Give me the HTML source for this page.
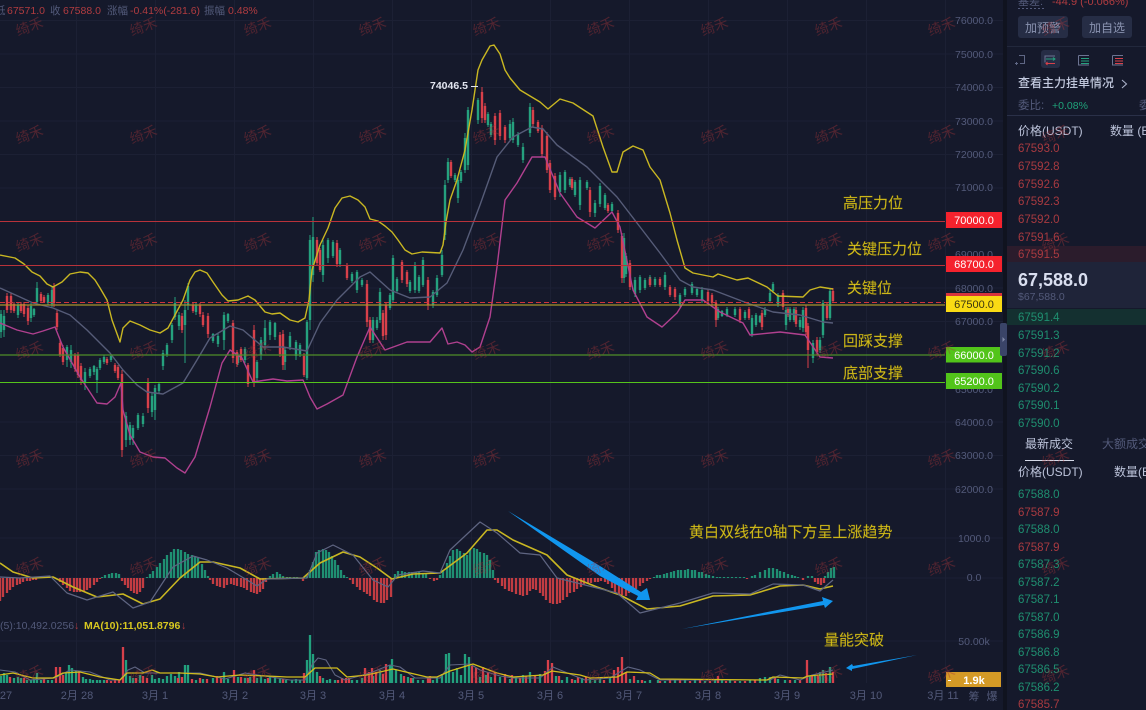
<!DOCTYPE html>
<html lang="zh">
<head>
<meta charset="utf-8">
<title>K线图</title>
<style>
html,body{margin:0;padding:0;background:#15192b;width:1146px;height:710px;overflow:hidden}
svg{display:block;font-family:"Liberation Sans","Noto Sans CJK SC",sans-serif;filter:blur(.35px)}
.ax{font-size:10.5px;fill:#535a7a;text-anchor:middle}
.dt{font-size:11px;fill:#535a7a;text-anchor:middle}
.tg{font-size:11px;fill:#fff;text-anchor:middle}
.an{font-size:15px;fill:#d6c01c;stroke:#8a7a10;stroke-width:.25}
.r{font-size:11.5px;fill:#a83a40}
.g{font-size:11.5px;fill:#1f8f70}
.h{font-size:12px;fill:#bcc3da}
.mu{fill:#535a7a}
.wm{font-size:14px;fill:#a8343a;fill-opacity:.4}
</style>
</head>
<body>
<svg width="1146" height="710" viewBox="0 0 1146 710" xmlns="http://www.w3.org/2000/svg">
<rect width="1146" height="710" fill="#15192b"/>
<!-- grid -->
<path d="M0 20.5H1003M0 54H1003M0 87.5H1003M0 121H1003M0 154.5H1003M0 188H1003M0 221.5H1003M0 288H1003M0 321.5H1003M0 422H1003M0 455.5H1003M0 489H1003M0 538H1003M0 578H1003M0 641H1003M76.5 0V683M155.5 0V683M234.5 0V683M313.5 0V683M392.5 0V683M471.5 0V683M550.5 0V683M629.5 0V683M708.5 0V683M787.5 0V683M866.5 0V683M945.5 0V683" stroke="#1c2034" stroke-width="1" fill="none"/>

<!-- candles: green wicks -->
<path stroke="#25a17e" stroke-width="1" fill="none" d="M1 310V338M4 310V337M18 302V318M31 303V322M34 308V317M37 282V305M48 293V305M52 287V307M67 345V367M71 345V368M85 368V390M90 367V378M94 365V375M97 367V393M100 358V370M104 355V364M111 355V362M126 412V447M130 422V445M133 425V445M138 413V430M143 413V427M152 393V417M155 385V420M159 383V393M163 350V370M167 343V357M172 323V343M175 297V320M179 312V330M185 300V363M188 283V310M196 303V315M213 333V343M218 333V347M224 312V350M228 313V323M238 353V365M245 347V363M257 360V383M261 337V360M265 320V350M270 320V340M275 322V340M285 348V370M290 332V350M296 340V360M300 343V357M307 320V380M310 235V330M313 217V282M323 240V282M328 238V263M333 240V258M340 248V267M352 272V283M357 270V293M362 278V287M373 317V343M377 317V330M380 288V323M390 293V310M393 255V303M397 277V293M410 280V293M415 262V293M419 275V293M423 257V287M433 290V308M437 275V297M442 250V277M445 180V240M448 158V183M455 173V182M458 177V203M461 170V183M465 133V173M468 107V170M478 98V124M488 112V127M491 122V137M510 120V140M513 118V143M518 132V147M523 143V163M530 103V137M560 172V197M565 170V193M570 177V187M575 180V197M580 177V210M587 180V190M595 200V217M600 183V207M605 193V210M612 202V213M624 233V283M626 253V277M635 277V297M640 275V293M645 278V290M650 275V287M655 277V287M665 272V290M680 293V307M685 287V297M692 282V295M697 287V297M702 287V303M718 307V320M722 310V317M727 307V317M735 307V317M745 310V320M752 315V337M756 313V327M760 315V323M765 307V317M770 290V303M773 282V293M778 293V307M786 307V330M790 307V322M794 307V322M800 317V330M803 307V332M813 340V363M820 337V353M823 300V338M830 288V320"/>
<!-- green bodies -->
<path stroke="#25a17e" stroke-width="2.4" fill="none" d="M1 314V332M4 316V330M18 305V315M31 306V318M34 309V315M37 288V302M48 295V303M52 290V304M67 347V360M71 350V362M85 372V382M90 369V376M94 366V372M97 369V380M100 360V368M104 357V362M111 356V360M126 416V440M130 425V440M133 428V438M138 415V428M143 416V424M152 396V412M155 388V410M159 384V391M163 353V366M167 345V355M172 325V340M175 303V317M179 315V326M185 310V325M188 286V305M196 305V312M213 334V341M218 336V344M224 315V340M228 314V321M238 355V363M245 349V360M257 362V378M261 340V355M265 328V345M270 322V335M275 323V337M285 350V362M290 336V347M296 342V356M300 345V354M307 322V378M310 240V320M313 237V275M323 245V275M328 240V258M333 242V256M340 250V264M352 274V281M357 272V290M362 280V285M373 320V340M377 320V328M380 292V320M390 295V308M393 258V300M397 279V291M410 282V291M415 265V290M419 277V291M423 260V285M433 292V305M437 278V295M442 255V275M445 185V235M448 162V180M455 175V180M458 180V198M461 172V181M465 138V170M468 110V165M478 100V120M488 114V125M491 124V135M510 124V138M513 122V140M518 134V145M523 147V160M530 107V133M560 175V192M565 172V190M570 179V185M575 182V195M580 180V205M587 182V188M595 203V213M600 186V204M605 195V208M612 204V211M624 238V278M626 256V274M635 280V294M640 277V290M645 280V288M650 277V285M655 279V285M665 275V287M680 295V304M685 289V295M692 284V293M697 289V295M702 290V300M718 309V318M722 311V316M727 309V315M735 309V315M745 312V318M752 318V334M756 315V325M760 316V322M765 309V315M770 293V301M773 284V291M778 295V304M786 310V325M790 309V320M794 309V320M800 320V327M803 310V328M813 343V358M820 340V350M823 303V335M830 291V318"/>
<!-- red wicks -->
<path stroke="#d8404a" stroke-width="1" fill="none" d="M7 293V313M11 293V313M14 302V313M21 302V313M24 302V317M28 305V325M41 292V303M44 295V303M54 283V307M57 310V330M60 340V357M63 345V365M75 353V372M78 352V378M81 363V385M107 357V365M115 363V373M118 365V380M122 370V457M148 378V413M182 313V333M193 303V313M200 303V317M203 312V327M208 313V338M233 320V363M237 350V367M241 347V362M248 363V387M254 325V387M280 332V357M283 330V370M304 353V377M317 237V266M320 248V272M337 240V267M347 263V280M367 280V327M370 317V343M383 310V340M386 302V340M402 260V283M407 270V287M428 277V310M451 160V178M482 87V123M485 103V123M495 113V145M500 110V140M505 125V143M533 107V127M538 120V133M542 125V157M547 132V173M550 160V193M555 173V200M572 177V190M590 187V217M608 203V213M618 210V233M622 233V283M630 260V290M650 277V287M660 277V287M670 285V297M675 287V300M708 290V303M712 293V305M716 300V327M740 307V323M749 307V320M762 310V330M783 290V310M788 307V317M796 307V327M806 305V335M808 323V368M817 337V355M827 303V320M833 288V303"/>
<path stroke="#d8404a" stroke-width="2.4" fill="none" d="M7 296V310M11 296V310M14 304V311M21 304V311M24 304V314M28 308V321M41 294V301M44 297V302M54 287V303M57 313V327M60 343V355M63 348V362M75 355V369M78 355V375M81 366V380M107 359V363M115 365V371M118 367V378M122 374V450M148 382V408M182 316V330M193 305V311M200 305V314M203 315V325M208 316V334M233 323V358M237 352V364M241 349V360M248 365V384M254 330V383M280 335V354M283 334V365M304 356V375M317 240V263M320 250V270M337 243V264M347 265V278M367 284V322M370 320V340M383 313V336M386 305V335M402 262V280M407 272V284M428 280V305M451 162V176M482 92V118M485 106V120M495 116V140M500 113V136M505 127V140M533 110V124M538 122V131M542 128V154M547 136V170M550 163V190M555 176V197M572 179V188M590 190V212M608 205V211M618 213V230M622 236V278M630 263V287M650 279V285M660 279V285M670 287V295M675 289V297M708 292V301M712 295V303M716 303V320M740 309V320M749 309V318M762 313V327M783 293V307M788 309V315M796 310V324M806 308V332M808 326V350M817 340V352M827 306V318M833 291V301"/>

<!-- bands -->
<polyline fill="none" stroke="#c9b722" stroke-width="1.4" stroke-linejoin="round" points="0,255 15,258 24,264 32,272 40,276 47,284 53,287 62,282 70,274 80,272 88,273 95,280 100,288 107,300 112,320 120,342 123,328 130,321 140,325 150,330 160,333 168,328 175,315 183,300 190,280 195,272 200,270 207,273 213,282 222,295 228,301 238,300 248,296 255,300 265,312 272,314 280,313 290,320 298,322 305,318 309,300 312,270 320,245 328,228 335,208 342,198 350,196 358,200 365,207 370,219 378,221 385,226 392,232 398,240 405,250 412,254 422,252 440,253 443,245 446,222 450,200 457,180 465,150 472,110 478,70 482,60 490,46 494,45 500,54 505,70 510,78 520,90 530,96 540,102 548,109 560,99 573,103 593,116 603,147 612,172 617,172 623,152 633,146 643,150 650,167 660,180 670,213 677,240 685,268 693,273 713,277 718,274 737,280 748,278 767,287 778,296 803,297 810,290 820,287 833,289"/>
<polyline fill="none" stroke="#565c78" stroke-width="1.4" stroke-linejoin="round" points="0,288 20,297 33,303 53,308 70,315 87,330 110,353 123,370 137,385 147,392 163,394 183,383 197,360 210,338 230,326 243,330 263,347 283,347 307,351 320,323 337,300 360,277 370,272 390,290 410,298 430,297 447,283 463,250 480,205 497,157 513,137 532,127 543,129 557,145 587,167 617,197 637,223 660,253 680,280 693,287 713,290 747,303 773,312 800,315 823,322 833,323"/>
<polyline fill="none" stroke="#b0408f" stroke-width="1.4" stroke-linejoin="round" points="0,323 17,330 33,334 43,331 55,327 63,347 80,377 97,403 107,404 115,397 121,383 123,410 130,435 140,452 153,457 165,458 177,468 185,473 195,457 210,407 222,363 230,350 242,358 253,382 273,379 287,381 303,380 310,397 317,409 327,404 343,395 357,357 370,327 385,350 407,342 430,342 442,328 448,344 457,342 465,345 472,352 480,347 490,317 497,267 505,200 517,183 532,157 545,157 560,193 577,217 595,228 612,212 620,227 633,290 647,317 662,327 677,313 685,300 703,300 720,312 743,323 750,335 780,332 805,335 820,357 833,358"/>

<!-- horizontal levels -->
<path d="M0 221.500H945M0 265.500H945" stroke="#b8323a" stroke-width="1" fill="none"/>
<path d="M0 302.500H945" stroke="#d0343c" stroke-width="1" stroke-dasharray="5 3" fill="none"/>
<path d="M0 305H945" stroke="#a8942a" stroke-width="1.2" fill="none"/>
<path d="M0 355H945" stroke="#4f8f28" stroke-width="1.2" fill="none"/>
<path d="M0 382.500H945" stroke="#55c41c" stroke-width="1" fill="none"/>

<!-- top info -->
<text x="0" y="14" style="font-size:10.5px">
<tspan x="-5" class="mu">低</tspan><tspan x="7" fill="#b03c40">67571.0</tspan><tspan x="50" class="mu">收</tspan><tspan x="63" fill="#b03c40">67588.0</tspan><tspan x="107" class="mu">涨幅</tspan><tspan x="130" fill="#b03c40">-0.41%(-281.6)</tspan><tspan x="204" class="mu">振幅</tspan><tspan x="228" fill="#b03c40">0.48%</tspan>
</text>
<text x="430" y="89" style="font-size:10.5px;font-weight:bold" fill="#e2e5f0">74046.5</text>
<path d="M471 86.500H478" stroke="#e2e5f0" stroke-width="1"/>

<!-- MACD histogram -->
<path stroke="#1f8f72" stroke-width="2.3" fill="none" d="M40 578V577M43 578V577M47 578V577M50 578V577M54 578V577M102 578V577M105 578V575M109 578V574M112 578V573M116 578V573M119 578V574M147 578V577M150 578V574M153 578V571M157 578V567M160 578V563M164 578V559M167 578V555M171 578V552M174 578V549M178 578V549M181 578V550M185 578V552M188 578V554M192 578V555M195 578V556M198 578V558M202 578V564M205 578V570M208 578V576M270 578V576M273 578V574M277 578V572M280 578V574M283 578V576M287 578V577M290 578V577M294 578V577M297 578V577M307 578V576M310 578V570M313 578V562M316 578V552M319 578V550M323 578V549M326 578V550M329 578V552M332 578V556M335 578V560M338 578V565M341 578V570M344 578V575M347 578V577M395 578V574M398 578V571M402 578V571M405 578V572M409 578V572M412 578V572M416 578V572M419 578V572M423 578V573M426 578V574M440 578V575M443 578V570M447 578V563M450 578V556M453 578V550M457 578V549M460 578V551M464 578V553M467 578V555M470 578V549M474 578V548M477 578V549M480 578V552M484 578V553M487 578V555M490 578V560M493 578V570M654 578V577M657 578V575M660 578V575M664 578V574M667 578V573M671 578V572M674 578V571M678 578V570M681 578V570M685 578V570M688 578V569M692 578V570M695 578V570M699 578V572M702 578V572M706 578V574M709 578V575M713 578V576M717 578V577M720 578V577M724 578V577M728 578V577M732 578V577M736 578V577M740 578V577M744 578V577M752 578V576M755 578V575M760 578V572M765 578V570M769 578V568M773 578V568M777 578V569M780 578V571M784 578V572M788 578V574M792 578V575M795 578V576M798 578V577M808 578V576M812 578V576M825 578V576M828 578V572M831 578V568M834 578V567"/>
<path stroke="#c23c42" stroke-width="2.3" fill="none" d="M0 578V601M3 578V597M7 578V593M10 578V590M13 578V587M17 578V585M20 578V584M23 578V582M27 578V581M30 578V581M33 578V580M36 578V580M60 578V582M63 578V585M67 578V588M70 578V591M74 578V592M77 578V592M80 578V592M84 578V592M87 578V590M90 578V588M94 578V585M97 578V582M100 578V579M122 578V581M125 578V585M128 578V588M131 578V591M134 578V593M137 578V594M140 578V592M143 578V588M210 578V580M213 578V584M217 578V586M220 578V587M224 578V588M227 578V585M231 578V584M234 578V585M237 578V586M241 578V587M244 578V588M247 578V590M251 578V592M254 578V593M257 578V594M260 578V592M263 578V589M266 578V582M303 578V581M350 578V580M353 578V584M357 578V587M360 578V590M364 578V592M367 578V594M370 578V596M374 578V600M377 578V602M381 578V603M384 578V603M387 578V600M391 578V597M430 578V579M434 578V581M437 578V580M495 578V580M498 578V583M502 578V586M505 578V589M509 578V591M512 578V592M516 578V594M520 578V595M523 578V596M527 578V595M530 578V591M533 578V589M536 578V590M540 578V593M543 578V596M546 578V600M550 578V603M553 578V604M557 578V604M560 578V603M563 578V600M567 578V597M570 578V593M574 578V592M577 578V589M581 578V587M584 578V585M588 578V584M591 578V583M595 578V582M598 578V582M601 578V581M605 578V582M608 578V584M612 578V588M615 578V592M619 578V594M622 578V595M626 578V596M629 578V593M633 578V591M636 578V589M640 578V586M643 578V583M647 578V581M650 578V579M747 578V579M803 578V580M815 578V582M818 578V584M821 578V585M824 578V583"/>
<!-- MACD lines -->
<polyline fill="none" stroke="#c9b722" stroke-width="1.6" stroke-linejoin="round" points="0,563 13,572 33,578 53,577 73,587 97,597 123,594 143,604 160,599 180,578 200,562 213,562 240,568 260,579 303,578 320,563 343,552 360,557 377,568 392,579 413,574 440,573 467,553 487,530 497,530 513,540 547,555 567,575 597,587 620,595 647,609 680,606 713,596 750,595 780,586 803,585 820,589 833,586"/>
<polyline fill="none" stroke="#5f6582" stroke-width="1.2" stroke-linejoin="round" points="0,577 20,578 50,576 67,593 87,600 113,592 133,608 150,602 173,567 193,556 207,560 227,568 257,586 267,579 307,578 317,553 333,545 353,555 373,580 388,587 398,575 423,571 440,573 450,550 480,522 497,533 520,553 540,555 557,578 593,587 617,593 640,613 680,603 713,593 750,594 773,584 803,585 820,591 833,580"/>

<!-- volume legend -->
<text y="629" style="font-size:10.5px"><tspan x="0" class="mu">(5):10,492.0256</tspan><tspan x="74" fill="#b03c40">↓</tspan><tspan x="84" fill="#d8c820" font-weight="bold">MA(10):11,051.8796</tspan><tspan x="181" fill="#b03c40">↓</tspan></text>

<!-- volume bars -->
<path stroke="#22a07d" stroke-width="2.3" fill="none" d="M1 683V676M4 683V673M7 683V675M14 683V678M18 683V677M21 683V678M27 683V680M31 683V680M34 683V679M37 683V673M41 683V680M48 683V680M52 683V680M66 683V672M69 683V665M72 683V668M76 683V671M83 683V677M86 683V679M90 683V679M93 683V680M97 683V680M100 683V680M104 683V680M126 683V660M130 683V676M133 683V678M140 683V675M152 683V675M155 683V679M159 683V678M163 683V679M167 683V676M171 683V674M175 683V676M179 683V672M185 683V665M188 683V665M196 683V680M203 683V679M213 683V678M224 683V672M228 683V679M238 683V677M245 683V678M250 683V677M257 683V678M261 683V676M265 683V679M270 683V677M275 683V677M280 683V679M286 683V680M292 683V680M296 683V679M300 683V680M307 683V660M310 683V635M313 683V654M317 683V672M323 683V678M327 683V680M330 683V679M335 683V680M352 683V680M357 683V680M362 683V678M373 683V676M380 683V670M390 683V665M392 683V659M396 683V670M401 683V674M408 683V677M413 683V678M418 683V680M423 683V680M433 683V680M437 683V678M442 683V674M446 683V654M449 683V653M453 683V672M457 683V668M461 683V675M465 683V654M469 683V657M480 683V677M486 683V675M491 683V677M500 683V677M510 683V679M516 683V677M523 683V675M530 683V672M540 683V674M556 683V676M562 683V680M567 683V677M575 683V680M582 683V678M590 683V678M595 683V680M600 683V678M610 683V677M630 683V679M638 683V680M645 683V681M650 683V680M658 683V680M665 683V681M675 683V679M685 683V679M695 683V680M705 683V681M715 683V680M722 683V680M730 683V680M740 683V681M750 683V680M760 683V678M765 683V677M770 683V677M778 683V679M785 683V680M795 683V680M810 683V676M815 683V674M820 683V672M823 683V670M830 683V667"/>
<path stroke="#d8404a" stroke-width="2.3" fill="none" d="M10 683V677M24 683V678M44 683V679M56 683V667M60 683V667M63 683V675M79 683V671M107 683V680M111 683V681M115 683V680M119 683V680M123 683V647M136 683V678M143 683V676M147 683V678M178 683V678M182 683V677M192 683V679M200 683V678M207 683V679M217 683V676M221 683V678M234 683V670M241 683V677M248 683V678M254 683V670M268 683V678M283 683V679M304 683V673M320 683V676M338 683V680M342 683V678M346 683V678M349 683V678M365 683V668M369 683V672M372 683V668M376 683V672M383 683V674M386 683V664M404 683V676M411 683V678M428 683V678M430 683V676M472 683V666M476 683V668M483 683V667M488 683V672M495 683V672M505 683V674M512 683V675M520 683V678M526 683V676M535 683V676M545 683V671M548 683V660M552 683V663M559 683V676M572 683V679M578 683V677M586 683V677M604 683V680M614 683V670M618 683V667M622 683V657M626 683V672M634 683V676M642 683V680M660 683V681M670 683V680M680 683V680M690 683V681M700 683V680M710 683V681M718 683V676M726 683V681M735 683V681M745 683V681M755 683V680M775 683V678M790 683V680M800 683V680M807 683V660M812 683V676M818 683V676M826 683V673M833 683V672"/>
<polyline fill="none" stroke="#5f6582" stroke-width="1.1" stroke-linejoin="round" points="0,670 15,672 30,680 55,678 70,670 90,672 110,680 120,680 128,670 135,667 145,673 165,673 200,673 225,679 245,673 290,680 305,680 312,665 318,658 326,660 335,675 345,680 370,673 390,665 400,667 415,678 440,678 450,665 470,664 480,670 500,676 513,678 540,678 553,667 565,672 585,680 610,678 628,667 640,670 660,680 770,680 780,675 800,680 812,675 825,672 833,670"/>
<polyline fill="none" stroke="#d2bd1c" stroke-width="1.3" stroke-linejoin="round" points="0,675 13,673 33,678 53,678 63,673 80,672 100,677 120,680 127,673 143,673 152,670 160,673 180,673 200,674 217,677 240,675 267,676 287,677 305,677 315,668 337,668 347,677 367,675 393,669 427,677 437,677 450,671 473,664 497,673 513,677 543,675 552,671 580,675 590,678 617,677 627,672 650,673 660,679 767,680 773,677 803,678 808,676 833,674"/>

<!-- blue arrows -->
<polygon fill="#1196ee" points="508,511 600,566 641,592 647,588 650,600 636,600 638,596 600,576"/>
<polygon fill="#1196ee" points="682,629 823,601 822,597 833,601 825,608 824,605"/>
<polygon fill="#1196ee" points="917,655 853,666 852,664 846,668 852,671 852,669"/>

<!-- annotations -->
<text class="an" x="843" y="208">高压力位</text>
<text class="an" x="847" y="254">关键压力位</text>
<text class="an" x="847" y="293">关键位</text>
<text class="an" x="843" y="346">回踩支撑</text>
<text class="an" x="843" y="378">底部支撑</text>
<text class="an" x="689" y="537">黄白双线在0轴下方呈上涨趋势</text>
<text class="an" x="824" y="645">量能突破</text>

<!-- price axis -->
<text class="ax" x="974" y="24">76000.0</text>
<text class="ax" x="974" y="58">75000.0</text>
<text class="ax" x="974" y="91">74000.0</text>
<text class="ax" x="974" y="125">73000.0</text>
<text class="ax" x="974" y="158">72000.0</text>
<text class="ax" x="974" y="191">71000.0</text>
<text class="ax" x="974" y="258">69000.0</text>
<text class="ax" x="974" y="292">68000.0</text>
<text class="ax" x="974" y="325">67000.0</text>
<text class="ax" x="974" y="393">65000.0</text>
<text class="ax" x="974" y="426">64000.0</text>
<text class="ax" x="974" y="459">63000.0</text>
<text class="ax" x="974" y="493">62000.0</text>
<text class="ax" x="974" y="542">1000.0</text>
<text class="ax" x="974" y="581">0.0</text>
<text class="ax" x="974" y="645">50.00k</text>

<rect x="946" y="212" width="56" height="16" fill="#f5222d"/><text class="tg" x="974" y="224">70000.0</text>
<rect x="946" y="256" width="56" height="16" fill="#f5222d"/><text class="tg" x="974" y="268">68700.0</text>
<rect x="946" y="293" width="56" height="3" fill="#d8343c"/>
<rect x="946" y="296" width="56" height="16" fill="#fadb14"/><text class="tg" x="974" y="308" style="fill:#3a3410">67500.0</text>
<rect x="946" y="347" width="56" height="15.500" fill="#52c41a"/><text class="tg" x="974" y="359">66000.0</text>
<rect x="946" y="373" width="56" height="16" fill="#52c41a"/><text class="tg" x="974" y="385">65200.0</text>
<rect x="946" y="672" width="55" height="15" fill="#d49a26"/><path d="M948 680.500H951" stroke="#fff"/><text class="tg" x="974" y="684" style="font-weight:bold">1.9k</text>

<!-- date axis -->
<text class="dt" x="6" y="699">27</text>
<text class="dt" x="77" y="699">2月 28</text>
<text class="dt" x="155" y="699">3月 1</text>
<text class="dt" x="235" y="699">3月 2</text>
<text class="dt" x="313" y="699">3月 3</text>
<text class="dt" x="392" y="699">3月 4</text>
<text class="dt" x="471" y="699">3月 5</text>
<text class="dt" x="550" y="699">3月 6</text>
<text class="dt" x="629" y="699">3月 7</text>
<text class="dt" x="708" y="699">3月 8</text>
<text class="dt" x="787" y="699">3月 9</text>
<text class="dt" x="866" y="699">3月 10</text>
<text class="dt" x="943" y="699">3月 11</text>
<text class="dt" x="974" y="700">筹</text>
<text class="dt" x="992" y="700">爆</text>

<!-- right panel -->
<rect x="1003" y="0" width="4" height="710" fill="#10131f"/>
<rect x="1007" y="0" width="139" height="710" fill="#15192b"/>
<rect x="1000" y="323" width="7" height="33" rx="2" fill="#3a4468"/>
<path d="M1002.500 337L1005 339.500L1002.500 342Z" fill="#8088a8"/>

<text x="1018" y="5" style="font-size:11px" class="mu">基差:</text>
<path d="M1018 8.500H1044" stroke="#535a7a" stroke-dasharray="2 2"/>
<text x="1052" y="5" style="font-size:11px" fill="#b03c40">-44.9 (-0.066%)</text>

<rect x="1018" y="16" width="50" height="22" rx="3" fill="#262d45"/>
<text x="1043" y="32" text-anchor="middle" style="font-size:12px" fill="#8a93b0">加预警</text>
<rect x="1082" y="16" width="50" height="22" rx="3" fill="#262d45"/>
<text x="1107" y="32" text-anchor="middle" style="font-size:12px" fill="#8a93b0">加自选</text>
<path d="M1007 46.500H1146" stroke="#22283c"/>

<!-- tool icons -->
<path d="M1019 55.500H1024.500V63.500H1020M1016.500 62V65M1015 63.500H1018" stroke="#5f6785" fill="none"/>
<rect x="1041" y="50" width="19" height="18" rx="3" fill="#262d45"/>
<path d="M1045 55.500V62.500M1045 56H1055" stroke="#6c7492" fill="none"/>
<path d="M1046 59H1055M1053 57.500L1055 59L1053 60.500" stroke="#25a17e" fill="none"/>
<path d="M1046 63.500H1055M1047.500 62L1046 63.500L1047.500 65" stroke="#d8404a" fill="none"/>
<path d="M1078.500 55.500V65H1089M1078.500 55.500H1089" stroke="#6c7492" fill="none"/>
<path d="M1081 58.500H1089M1081 61H1089M1081 63.500H1089" stroke="#25a17e" fill="none"/>
<path d="M1112.500 55.500V65H1123M1112.500 55.500H1123" stroke="#6c7492" fill="none"/>
<path d="M1115 58.500H1123M1115 61H1123M1115 63.500H1123" stroke="#d8404a" fill="none"/>

<text x="1018" y="87" style="font-size:12px;font-weight:500" fill="#c2c9de">查看主力挂单情况</text>
<path d="M1122 80L1126.500 84L1122 88" stroke="#aab2ca" stroke-width="1.100" fill="none"/>
<text x="1018" y="109" style="font-size:11.500px" class="mu">委比:</text>
<text x="1052" y="109" style="font-size:10.500px" fill="#1fa37a">+0.08%</text>
<text x="1139" y="109" style="font-size:11.500px" class="mu">委</text>
<path d="M1007 115.500H1146" stroke="#2a3048"/>

<text class="h" x="1018" y="135">价格(USDT)</text>
<text class="h" x="1110" y="135">数量 (BTC)</text>

<text class="r" x="1018" y="152">67593.0</text>
<text class="r" x="1018" y="170">67592.8</text>
<text class="r" x="1018" y="188">67592.6</text>
<text class="r" x="1018" y="205">67592.3</text>
<text class="r" x="1018" y="223">67592.0</text>
<text class="r" x="1018" y="241">67591.6</text>
<rect x="1007" y="246" width="139" height="16" fill="#2b1c2c"/>
<text class="r" x="1018" y="258">67591.5</text>

<rect x="1007" y="262" width="139" height="46" fill="#1f2439"/>
<text x="1018" y="286" style="font-size:18px;font-weight:bold" fill="#d9deef">67,588.0</text>
<text x="1018" y="300" style="font-size:10.500px" class="mu">$67,588.0</text>

<rect x="1007" y="309" width="139" height="16" fill="#143030"/>
<text class="g" x="1018" y="321">67591.4</text>
<text class="g" x="1018" y="339">67591.3</text>
<text class="g" x="1018" y="357">67591.2</text>
<text class="g" x="1018" y="374">67590.6</text>
<text class="g" x="1018" y="392">67590.2</text>
<text class="g" x="1018" y="409">67590.1</text>
<text class="g" x="1018" y="427">67590.0</text>

<text x="1025" y="448" style="font-size:12px" fill="#bcc3da">最新成交</text>
<text x="1102" y="448" style="font-size:12px" class="mu">大额成交</text>
<path d="M1025 460.500H1074" stroke="#d5d9e8"/>

<text class="h" x="1018" y="476">价格(USDT)</text>
<text class="h" x="1114" y="476">数量(BTC)</text>

<text class="g" x="1018" y="498">67588.0</text>
<text class="r" x="1018" y="516">67587.9</text>
<text class="g" x="1018" y="533">67588.0</text>
<text class="r" x="1018" y="551">67587.9</text>
<text class="g" x="1018" y="568">67587.3</text>
<text class="g" x="1018" y="586">67587.2</text>
<text class="g" x="1018" y="603">67587.1</text>
<text class="g" x="1018" y="621">67587.0</text>
<text class="g" x="1018" y="638">67586.9</text>
<text class="g" x="1018" y="656">67586.8</text>
<text class="g" x="1018" y="673">67586.5</text>
<text class="g" x="1018" y="691">67586.2</text>
<text class="r" x="1018" y="708">67585.7</text>

<!-- watermarks -->
<g transform="translate(3,0)">
<text class="wm" transform="translate(15,36) rotate(-20)">绮禾</text><text class="wm" transform="translate(129,36) rotate(-20)">绮禾</text><text class="wm" transform="translate(243,36) rotate(-20)">绮禾</text><text class="wm" transform="translate(358,36) rotate(-20)">绮禾</text><text class="wm" transform="translate(472,36) rotate(-20)">绮禾</text><text class="wm" transform="translate(586,36) rotate(-20)">绮禾</text><text class="wm" transform="translate(700,36) rotate(-20)">绮禾</text><text class="wm" transform="translate(814,36) rotate(-20)">绮禾</text><text class="wm" transform="translate(927,36) rotate(-20)">绮禾</text><text class="wm" transform="translate(1041,36) rotate(-20)">绮禾</text>
<text class="wm" transform="translate(15,144) rotate(-20)">绮禾</text><text class="wm" transform="translate(129,144) rotate(-20)">绮禾</text><text class="wm" transform="translate(243,144) rotate(-20)">绮禾</text><text class="wm" transform="translate(358,144) rotate(-20)">绮禾</text><text class="wm" transform="translate(472,144) rotate(-20)">绮禾</text><text class="wm" transform="translate(586,144) rotate(-20)">绮禾</text><text class="wm" transform="translate(700,144) rotate(-20)">绮禾</text><text class="wm" transform="translate(814,144) rotate(-20)">绮禾</text><text class="wm" transform="translate(927,144) rotate(-20)">绮禾</text><text class="wm" transform="translate(1041,144) rotate(-20)">绮禾</text>
<text class="wm" transform="translate(15,252) rotate(-20)">绮禾</text><text class="wm" transform="translate(129,252) rotate(-20)">绮禾</text><text class="wm" transform="translate(243,252) rotate(-20)">绮禾</text><text class="wm" transform="translate(358,252) rotate(-20)">绮禾</text><text class="wm" transform="translate(472,252) rotate(-20)">绮禾</text><text class="wm" transform="translate(586,252) rotate(-20)">绮禾</text><text class="wm" transform="translate(700,252) rotate(-20)">绮禾</text><text class="wm" transform="translate(814,252) rotate(-20)">绮禾</text><text class="wm" transform="translate(927,252) rotate(-20)">绮禾</text><text class="wm" transform="translate(1041,252) rotate(-20)">绮禾</text>
<text class="wm" transform="translate(15,360) rotate(-20)">绮禾</text><text class="wm" transform="translate(129,360) rotate(-20)">绮禾</text><text class="wm" transform="translate(243,360) rotate(-20)">绮禾</text><text class="wm" transform="translate(358,360) rotate(-20)">绮禾</text><text class="wm" transform="translate(472,360) rotate(-20)">绮禾</text><text class="wm" transform="translate(586,360) rotate(-20)">绮禾</text><text class="wm" transform="translate(700,360) rotate(-20)">绮禾</text><text class="wm" transform="translate(814,360) rotate(-20)">绮禾</text><text class="wm" transform="translate(927,360) rotate(-20)">绮禾</text><text class="wm" transform="translate(1041,360) rotate(-20)">绮禾</text>
<text class="wm" transform="translate(15,468) rotate(-20)">绮禾</text><text class="wm" transform="translate(129,468) rotate(-20)">绮禾</text><text class="wm" transform="translate(243,468) rotate(-20)">绮禾</text><text class="wm" transform="translate(358,468) rotate(-20)">绮禾</text><text class="wm" transform="translate(472,468) rotate(-20)">绮禾</text><text class="wm" transform="translate(586,468) rotate(-20)">绮禾</text><text class="wm" transform="translate(700,468) rotate(-20)">绮禾</text><text class="wm" transform="translate(814,468) rotate(-20)">绮禾</text><text class="wm" transform="translate(927,468) rotate(-20)">绮禾</text><text class="wm" transform="translate(1041,468) rotate(-20)">绮禾</text>
<text class="wm" transform="translate(15,576) rotate(-20)">绮禾</text><text class="wm" transform="translate(129,576) rotate(-20)">绮禾</text><text class="wm" transform="translate(243,576) rotate(-20)">绮禾</text><text class="wm" transform="translate(358,576) rotate(-20)">绮禾</text><text class="wm" transform="translate(472,576) rotate(-20)">绮禾</text><text class="wm" transform="translate(586,576) rotate(-20)">绮禾</text><text class="wm" transform="translate(700,576) rotate(-20)">绮禾</text><text class="wm" transform="translate(814,576) rotate(-20)">绮禾</text><text class="wm" transform="translate(927,576) rotate(-20)">绮禾</text><text class="wm" transform="translate(1041,576) rotate(-20)">绮禾</text>
<text class="wm" transform="translate(15,684) rotate(-20)">绮禾</text><text class="wm" transform="translate(129,684) rotate(-20)">绮禾</text><text class="wm" transform="translate(243,684) rotate(-20)">绮禾</text><text class="wm" transform="translate(358,684) rotate(-20)">绮禾</text><text class="wm" transform="translate(472,684) rotate(-20)">绮禾</text><text class="wm" transform="translate(586,684) rotate(-20)">绮禾</text><text class="wm" transform="translate(700,684) rotate(-20)">绮禾</text><text class="wm" transform="translate(814,684) rotate(-20)">绮禾</text><text class="wm" transform="translate(927,684) rotate(-20)">绮禾</text><text class="wm" transform="translate(1041,684) rotate(-20)">绮禾</text>
</g>
</svg>
</body>
</html>
